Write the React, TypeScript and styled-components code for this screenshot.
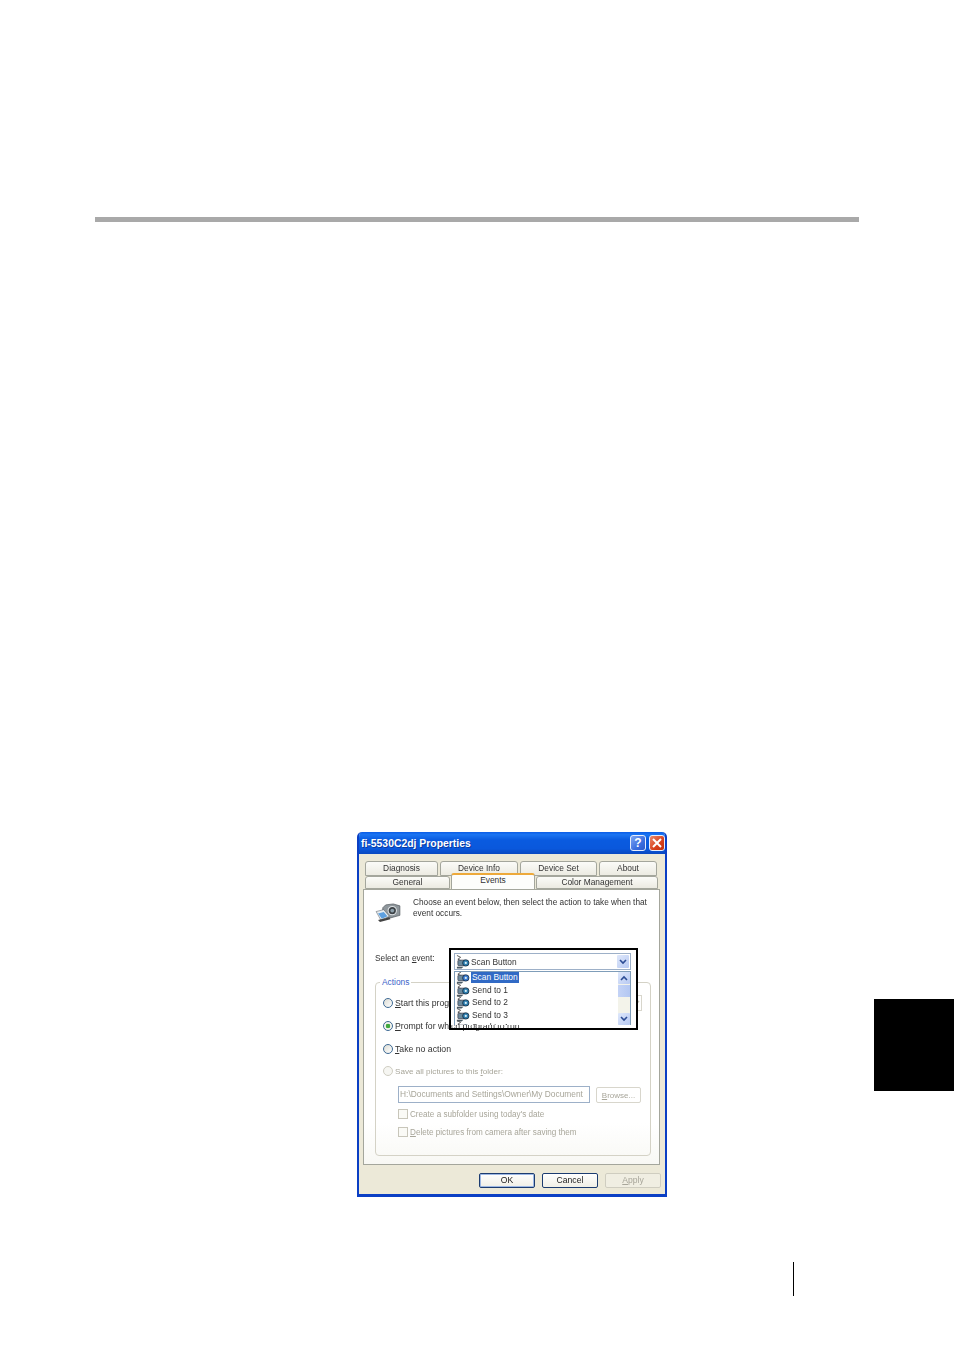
import React from "react";
import styled, { createGlobalStyle } from "styled-components";

const Global = createGlobalStyle`
  html, body { margin: 0; padding: 0; background: #fff; }
  body { font-family: "Liberation Sans", Arial, sans-serif; }
`;

const Page = styled.div`
  width: 954px;
  height: 1350px;
  overflow: hidden;
  background: #fff;
  padding-top: 217px;
  box-sizing: border-box;
`;
const Rule = styled.div`
  height: 5px;
  margin: 0 95px;
  background: #a9a9a9;
`;
const Middle = styled.div`
  display: flex;
  align-items: flex-start;
  margin-top: 610px;
  padding-left: 357px;
`;
const ThumbTab = styled.div`
  width: 80px;
  height: 92px;
  margin-top: 167px;
  margin-left: auto;
  background: #000;
`;
const PageMark = styled.div`
  width: 1px;
  height: 34px;
  margin: 65px 0 0 793px;
  background: #000;
`;

const Dialog = styled.div`
  width: 310px;
  height: 365px;
  box-sizing: border-box;
  border: solid #0b3fc4;
  border-width: 0 2px 3px 2px;
  border-radius: 5px 5px 0 0;
  background: #ece9d8;
  display: flex;
  flex-direction: column;
  font-size: 8.3px;
  color: #222;
  filter: blur(0.35px);
  overflow: hidden;
`;
const TitleBar = styled.div`
  height: 22px;
  margin: 0 -2px;
  padding: 0 2px 0 4px;
  display: flex;
  align-items: center;
  gap: 3px;
  background: linear-gradient(180deg, #0a5ce6 0%, #1a74f2 12%, #0a5be0 35%, #0a58dc 75%, #0a49c0 100%);
`;
const TitleText = styled.span`
  flex: 1;
  color: #fff;
  font-size: 10.4px;
  font-weight: bold;
  text-shadow: 1px 1px 0 #0a3aa0;
`;
const CaptionButton = styled.div<{ $close?: boolean }>`
  width: 16px;
  height: 16px;
  box-sizing: border-box;
  display: flex;
  align-items: center;
  justify-content: center;
  border: 1px solid #e8eefc;
  border-radius: 3px;
  color: #fff;
  font-size: 12px;
  font-weight: bold;
  background: ${(p) =>
    p.$close
      ? "linear-gradient(135deg, #ea8a6c, #d8401c 60%, #c0300f)"
      : "linear-gradient(135deg, #7fa6f2, #3c6fe0 60%, #2a58cc)"};
`;

const Tabs = styled.div`
  margin: 7px 0 0 6px;
`;
const TabRow = styled.div<{ $first?: boolean }>`
  display: flex;
  align-items: flex-end;
  gap: ${(p) => (p.$first ? "2px" : "1px")};
  height: ${(p) => (p.$first ? "15px" : "13px")};
  line-height: ${(p) => (p.$first ? "13px" : "11px")};
`;
const Tab = styled.div<{ $w: number; $active?: boolean }>`
  width: ${(p) => p.$w}px;
  box-sizing: border-box;
  height: ${(p) => (p.$active ? "16px" : "100%")};
  position: relative;
  z-index: ${(p) => (p.$active ? 2 : 0)};
  text-align: center;
  font-size: 8.4px;
  color: #333;
  background: ${(p) => (p.$active ? "#fdfdfb" : "linear-gradient(180deg, #fbfbf8, #ecebe2)")};
  border: 1px solid #a4a69c;
  border-bottom: ${(p) => (p.$active ? "none" : "1px solid #a4a69c")};
  border-top: ${(p) => (p.$active ? "2px solid #eda93a" : "1px solid #a4a69c")};
  border-radius: 3px 3px 0 0;
`;

const Panel = styled.div`
  position: relative;
  width: 297px;
  height: 276px;
  margin: 0 0 0 4px;
  box-sizing: border-box;
  padding: 8px 9px 0 11px;
  background: linear-gradient(180deg, #ffffff 85%, #f8f8f4);
  border: 1px solid #a4a69c;
`;
const Intro = styled.div`
  display: flex;
  gap: 12px;
  height: 22px;
`;
const IntroText = styled.p`
  margin: 0;
  width: 245px;
  font-size: 8.27px;
  line-height: 10.5px;
  color: #333;
`;
const SelectLabel = styled.div`
  margin-top: 32px;
  height: 12px;
  line-height: 12px;
  color: #333;
`;
const Key = styled.span`
  text-decoration: underline;
`;
const Group = styled.div`
  position: relative;
  margin-top: 18px;
  width: 276px;
  height: 174px;
  box-sizing: border-box;
  padding: 12px 8px 0 7px;
  border: 1px solid #d4d2c6;
  border-radius: 4px;
`;
const Legend = styled.span`
  position: absolute;
  top: -6px;
  left: 4px;
  padding: 0 2px;
  background: #fff;
  color: #3a62c8;
  font-size: 8.4px;
  line-height: 11px;
`;
const Choice = styled.div<{ $disabled?: boolean }>`
  display: flex;
  align-items: center;
  gap: 1px;
  height: 16px;
  margin-bottom: 6.8px;
  font-size: ${(p) => (p.$disabled ? "8.1px" : "8.7px")};
  color: ${(p) => (p.$disabled ? "#a8a69a" : "#333")};
`;
const Radio = styled.span<{ $on?: boolean; $disabled?: boolean }>`
  width: 10px;
  height: 10px;
  flex: none;
  border-radius: 50%;
  box-sizing: border-box;
  margin-right: 1px;
  border: 1px solid ${(p) => (p.$disabled ? "#cfcdc2" : "#3e6a94")};
  background: ${(p) =>
    p.$on
      ? "radial-gradient(circle, #3fa83f 0 2px, #f4f4ee 2.6px)"
      : p.$disabled
      ? "#f6f6f2"
      : "linear-gradient(135deg, #dcdcd4, #ffffff)"};
`;
const GhostCombo = styled.div`
  margin-left: auto;
  width: 150px;
  height: 16px;
  box-sizing: border-box;
  display: flex;
  justify-content: flex-end;
  align-items: center;
  padding-right: 1px;
  border: 1px solid #d8d6cc;
  color: #c0c0b6;
`;
const FolderRow = styled.div`
  display: flex;
  align-items: center;
  gap: 6px;
  margin: 1.2px 0 0 15px;
`;
const PathField = styled.div`
  width: 192px;
  height: 17px;
  line-height: 15px;
  box-sizing: border-box;
  padding-left: 1px;
  border: 1px solid #9db0c8;
  color: #a8a69a;
  font-size: 8.4px;
  white-space: nowrap;
  overflow: hidden;
`;
const GhostButton = styled.div`
  width: 45px;
  height: 16px;
  line-height: 15px;
  text-align: center;
  box-sizing: border-box;
  border: 1px solid #d8d6cc;
  border-radius: 2px;
  color: #a8a69a;
  font-size: 8px;
`;
const CheckRow = styled.div<{ $first?: boolean }>`
  display: flex;
  align-items: center;
  gap: 2px;
  height: 12px;
  margin: ${(p) => (p.$first ? "5px" : "6px")} 0 0 15px;
  color: #a8a69a;
  font-size: 8.15px;
`;
const CheckBox = styled.span`
  width: 10px;
  height: 10px;
  flex: none;
  box-sizing: border-box;
  border: 1px solid #c8c6ba;
  background: #fafaf6;
`;

const Callout = styled.div`
  position: absolute;
  left: 85px;
  top: 58px;
  width: 189px;
  height: 82px;
  box-sizing: border-box;
  border: 2px solid #000;
  z-index: 3;
`;
const CalloutFill = styled.div`
  background: #fff;
  height: 75px;
  padding: 3px 5px 0 3px;
  box-sizing: border-box;
`;
const Combo = styled.div`
  height: 17px;
  box-sizing: border-box;
  display: flex;
  align-items: center;
  gap: 1px;
  padding: 0 1px 0 1px;
  border: 1px solid #9db0c8;
  font-size: 8.4px;
  color: #333;
`;
const ComboText = styled.span`
  flex: 1;
`;
const ArrowBox = styled.div<{ $h: number }>`
  width: 12px;
  height: ${(p) => p.$h}px;
  flex: none;
  display: flex;
  align-items: center;
  justify-content: center;
  border-radius: 1px;
  color: #2c4c94;
  background: linear-gradient(135deg, #dfe8fb, #b7c9f2);
`;
const ListArea = styled.div`
  display: flex;
  height: 54px;
  margin-top: 1px;
  border: 1px solid #7f9db9;
  border-bottom: none;
  box-sizing: border-box;
  overflow: hidden;
`;
const Items = styled.div`
  flex: 1;
  padding-left: 1px;
  margin-top: -1px;
`;
const Item = styled.div`
  display: flex;
  align-items: center;
  gap: 1px;
  height: 12.5px;
  font-size: 8.4px;
  color: #333;
`;
const ItemText = styled.span<{ $selected?: boolean }>`
  padding: 0 1px;
  line-height: 12px;
  color: ${(p) => (p.$selected ? "#fff" : "#333")};
  background: ${(p) => (p.$selected ? "#316ac5" : "transparent")};
`;
const Scrollbar = styled.div`
  width: 12px;
  display: flex;
  flex-direction: column;
  gap: 1px;
  background: #f3f3ea;
`;
const Thumb = styled.div`
  height: 12px;
  background: linear-gradient(90deg, #c4d3f6, #b3c7f2);
`;
const ScrollGap = styled.div`
  flex: 1;
`;
const Footer = styled.div`
  flex: 1;
  display: flex;
  justify-content: flex-end;
  gap: 7px;
  padding: 8px 4px 0 0;
`;
const DialogButton = styled.div<{ $default?: boolean; $disabled?: boolean }>`
  width: 56px;
  height: 15px;
  line-height: 13px;
  box-sizing: border-box;
  text-align: center;
  border-radius: 2px;
  font-size: 8.6px;
  border: 1px solid ${(p) => (p.$disabled ? "#cfcdc0" : "#1c3c70")};
  color: ${(p) => (p.$disabled ? "#a8a69a" : "#222")};
  background: ${(p) => (p.$disabled ? "#f0eee2" : "linear-gradient(180deg, #ffffff, #f0efe6)")};
  box-shadow: ${(p) => (p.$default ? "inset 0 0 0 1px #9db8e4" : "none")};
`;

const Chevron = ({ up }: { up?: boolean }) => (
  <svg width="8" height="6" viewBox="0 0 8 6" fill="none" stroke="currentColor" strokeWidth="1.6">
    <path d={up ? "M1 5 L4 2 L7 5" : "M1 1 L4 4 L7 1"} />
  </svg>
);

const CloseGlyph = () => (
  <svg width="10" height="10" viewBox="0 0 10 10" stroke="#fff" strokeWidth="2">
    <path d="M1 1 L9 9 M9 1 L1 9" />
  </svg>
);

const ScannerIcon = ({ shade = "#2f7fb0" }: { shade?: string }) => (
  <svg width="14" height="16" viewBox="0 0 15 16" style={{ flex: "none" }}>
    <path d="M1 1 L5 3 L2 5 L6 7" fill="none" stroke="#555" strokeWidth="1" />
    <rect x="2" y="6" width="8" height="6" rx="1" fill="#6c8a9c" stroke="#334" strokeWidth="0.7" />
    <circle cx="10.5" cy="9" r="3.4" fill={shade} stroke="#123" strokeWidth="0.8" />
    <circle cx="10.5" cy="9" r="1.2" fill="#d8eef6" />
    <path d="M1 13 L8 13 L6 15 L1 15 Z" fill="#4a5a64" />
  </svg>
);

const CameraIcon = () => (
  <svg width="26" height="19" viewBox="0 0 27 20" style={{ flex: "none", marginTop: 5 }}>
    <path d="M8 5 L11 2 L19 1 L26 3 L26 13 L15 16 L8 13 Z" fill="#8f979c" stroke="#4c5257" strokeWidth="0.7" />
    <circle cx="18" cy="8" r="4.4" fill="#3c4246" stroke="#dfe3e6" strokeWidth="1.1" />
    <circle cx="18" cy="8" r="2" fill="#8da0ac" />
    <path d="M1 9 L9 7 L15 14 L6 18 Z" fill="#e8eef2" stroke="#5d6468" strokeWidth="0.6" />
    <path d="M3 11 L9 9.5 L13 14 L7 16.5 Z" fill="#5ea0e0" />
    <path d="M3 18 L15 15 L16 17 L5 20 Z" fill="#444" />
  </svg>
);

const rowOne = [
  { label: "Diagnosis", w: 73 },
  { label: "Device Info", w: 78 },
  { label: "Device Set", w: 77 },
  { label: "About", w: 58 },
];
const rowTwo = [
  { label: "General", w: 85, active: false },
  { label: "Events", w: 84, active: true },
  { label: "Color Management", w: 122, active: false },
];
const items = ["Scan Button", "Send to 1", "Send to 2", "Send to 3", "Send to 4"];

export default function App() {
  return (
    <Page>
      <Global />
      <Rule />
      <Middle>
        <Dialog>
          <TitleBar>
            <TitleText>fi-5530C2dj Properties</TitleText>
            <CaptionButton>?</CaptionButton>
            <CaptionButton $close>
              <CloseGlyph />
            </CaptionButton>
          </TitleBar>
          <Tabs>
            <TabRow $first>
              {rowOne.map((t) => (
                <Tab key={t.label} $w={t.w}>
                  {t.label}
                </Tab>
              ))}
            </TabRow>
            <TabRow>
              {rowTwo.map((t) => (
                <Tab key={t.label} $w={t.w} $active={t.active}>
                  {t.label}
                </Tab>
              ))}
            </TabRow>
          </Tabs>
          <Panel>
            <Intro>
              <CameraIcon />
              <IntroText>
                Choose an event below, then select the action to take when that event occurs.
              </IntroText>
            </Intro>
            <SelectLabel>
              Select an <Key>e</Key>vent:
            </SelectLabel>
            <Group>
              <Legend>Actions</Legend>
              <Choice>
                <Radio />
                <span>
                  <Key>S</Key>tart this program:
                </span>
                <GhostCombo>
                  <Chevron />
                </GhostCombo>
              </Choice>
              <Choice>
                <Radio $on />
                <span>
                  <Key>P</Key>rompt for which program to run
                </span>
              </Choice>
              <Choice>
                <Radio />
                <span>
                  <Key>T</Key>ake no action
                </span>
              </Choice>
              <Choice $disabled>
                <Radio $disabled />
                <span>
                  Save all pictures to this <Key>f</Key>older:
                </span>
              </Choice>
              <FolderRow>
                <PathField>H:\Documents and Settings\Owner\My Document</PathField>
                <GhostButton>
                  <Key>B</Key>rowse...
                </GhostButton>
              </FolderRow>
              <CheckRow $first>
                <CheckBox />
                <span>Create a subfolder using today's date</span>
              </CheckRow>
              <CheckRow>
                <CheckBox />
                <span>
                  <Key>D</Key>elete pictures from camera after saving them
                </span>
              </CheckRow>
            </Group>
            <Callout>
              <CalloutFill>
                <Combo>
                  <ScannerIcon />
                  <ComboText>Scan Button</ComboText>
                  <ArrowBox $h={13}>
                    <Chevron />
                  </ArrowBox>
                </Combo>
                <ListArea>
                  <Items>
                    {items.map((label, i) => (
                      <Item key={label}>
                        <ScannerIcon shade={i === 0 ? "#3a7ad0" : "#2f7fb0"} />
                        <ItemText $selected={i === 0}>{label}</ItemText>
                      </Item>
                    ))}
                  </Items>
                  <Scrollbar>
                    <ArrowBox $h={12}>
                      <Chevron up />
                    </ArrowBox>
                    <Thumb />
                    <ScrollGap />
                    <ArrowBox $h={12}>
                      <Chevron />
                    </ArrowBox>
                  </Scrollbar>
                </ListArea>
              </CalloutFill>
            </Callout>
          </Panel>
          <Footer>
            <DialogButton $default>OK</DialogButton>
            <DialogButton>Cancel</DialogButton>
            <DialogButton $disabled>
              <Key>A</Key>pply
            </DialogButton>
          </Footer>
        </Dialog>
        <ThumbTab />
      </Middle>
      <PageMark />
    </Page>
  );
}
